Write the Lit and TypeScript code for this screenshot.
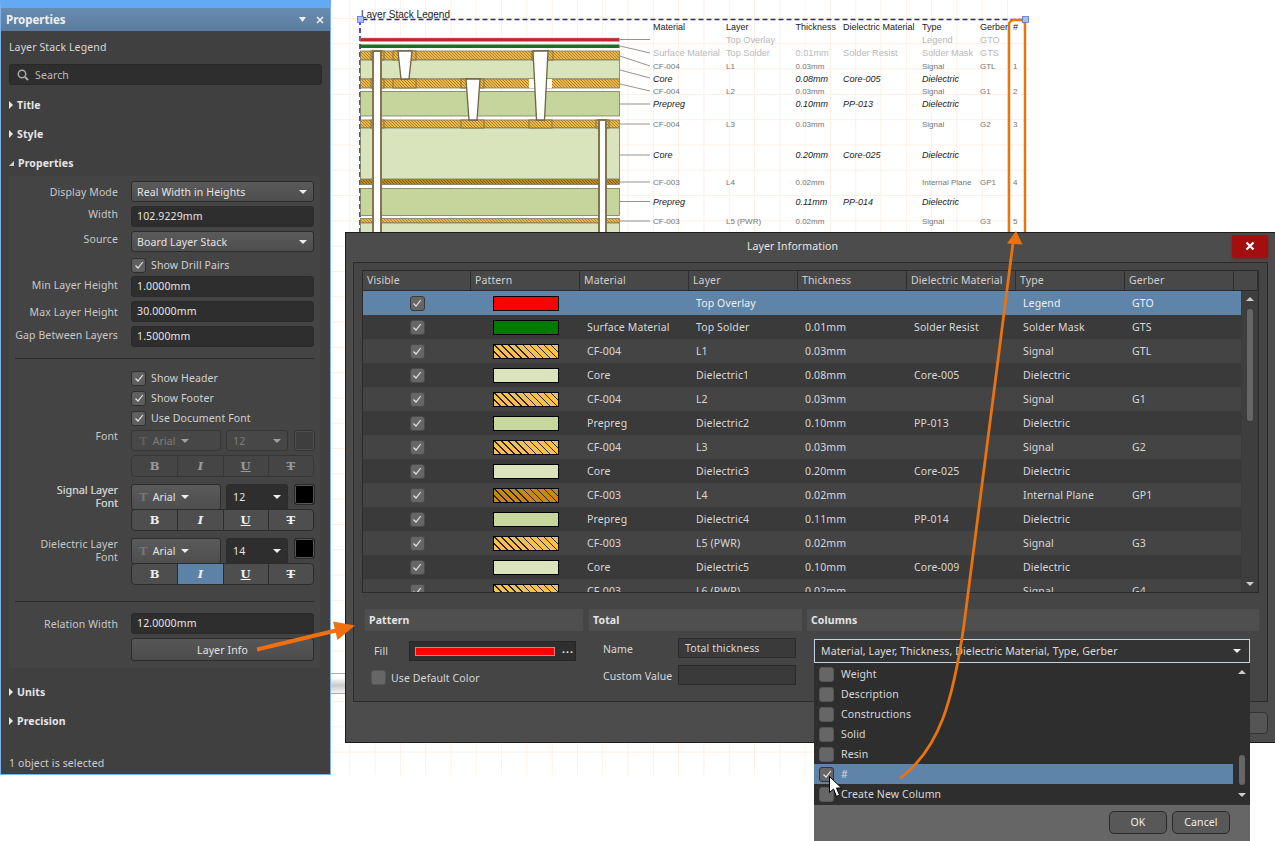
import { LitElement, html, svg, css } from "lit";
import { customElement } from "lit/decorators.js";

const CHECK = html`<svg class="tick" viewBox="0 0 12 12"><path d="M2.5 6.5 5 9l4.8-6" fill="none" stroke="#e6e6e6" stroke-width="1.2"/></svg>`;

type Row = [string, string, string, string, string, string, string];
const ROWS: Row[] = [
  ["red", "", "Top Overlay", "", "", "Legend", "GTO"],
  ["green", "Surface Material", "Top Solder", "0.01mm", "Solder Resist", "Solder Mask", "GTS"],
  ["hatch", "CF-004", "L1", "0.03mm", "", "Signal", "GTL"],
  ["core", "Core", "Dielectric1", "0.08mm", "Core-005", "Dielectric", ""],
  ["hatch", "CF-004", "L2", "0.03mm", "", "Signal", "G1"],
  ["prepreg", "Prepreg", "Dielectric2", "0.10mm", "PP-013", "Dielectric", ""],
  ["hatch", "CF-004", "L3", "0.03mm", "", "Signal", "G2"],
  ["core", "Core", "Dielectric3", "0.20mm", "Core-025", "Dielectric", ""],
  ["dark", "CF-003", "L4", "0.02mm", "", "Internal Plane", "GP1"],
  ["prepreg", "Prepreg", "Dielectric4", "0.11mm", "PP-014", "Dielectric", ""],
  ["hatch", "CF-003", "L5 (PWR)", "0.02mm", "", "Signal", "G3"],
  ["core", "Core", "Dielectric5", "0.10mm", "Core-009", "Dielectric", ""],
  ["hatch", "CF-003", "L6 (PWR)", "0.02mm", "", "Signal", "G4"],
];

// y, class, material, layer, thickness, dielectric, type, gerber, number
const LEGEND: [number, string, string, string, string, string, string, string, string][] = [
  [30, "lh", "Material", "Layer", "Thickness", "Dielectric Material", "Type", "Gerber", "#"],
  [43, "lf", "", "Top Overlay", "", "", "Legend", "GTO", ""],
  [56, "lf", "Surface Material", "Top Solder", "0.01mm", "Solder Resist", "Solder Mask", "GTS", ""],
  [69, "ls", "CF-004", "L1", "0.03mm", "", "Signal", "GTL", "1"],
  [82, "ld", "Core", "", "0.08mm", "Core-005", "Dielectric", "", ""],
  [94, "ls", "CF-004", "L2", "0.03mm", "", "Signal", "G1", "2"],
  [107, "ld", "Prepreg", "", "0.10mm", "PP-013", "Dielectric", "", ""],
  [127, "ls", "CF-004", "L3", "0.03mm", "", "Signal", "G2", "3"],
  [158, "ld", "Core", "", "0.20mm", "Core-025", "Dielectric", "", ""],
  [185, "ls", "CF-003", "L4", "0.02mm", "", "Internal Plane", "GP1", "4"],
  [205, "ld", "Prepreg", "", "0.11mm", "PP-014", "Dielectric", "", ""],
  [224, "ls", "CF-003", "L5 (PWR)", "0.02mm", "", "Signal", "G3", "5"],
];
const LEGEND_X = [653, 726, 795.5, 843, 922, 980, 1013];

const BANDS: [number, number, string][] = [
  [51, 9, "url(#hl)"], [60, 19, "#d9e3bc"], [79, 9, "url(#hl)"], [91.5, 24.5, "#c6d59c"],
  [120, 8, "url(#hl)"], [128, 51, "#d9e3bc"], [179.5, 5, "url(#hd)"], [188.5, 27, "#c6d59c"],
  [218.5, 4.5, "url(#hl)"], [223, 12, "#d9e3bc"],
];
const LEADERS: [number, number][] = [
  [39.5, 39.5], [46, 53], [56, 66], [70, 78], [84, 91], [104, 104], [124, 124], [155, 155], [182, 182], [201.5, 201.5], [221, 221],
];
const PADS: [number, number, number, number][] = [
  [371, 51, 13, 9], [393, 51, 23, 9], [532, 51, 21, 9],
  [393, 79, 23, 9], [461, 79, 23, 9], [371, 79, 13, 9],
  [461, 120, 23, 8], [529, 120, 23, 8], [596, 120, 13, 8], [371, 120, 13, 8],
];

@customElement("app-root")
export class AppRoot extends LitElement {
  static styles = css`
    :host { display: block; position: relative; width: 1275px; height: 841px; overflow: hidden; background: #fff;
      font-family: "Noto Sans", "Liberation Sans", sans-serif; font-size: 10.5px; letter-spacing: .12px; color: #d8d8d8; }
    * { box-sizing: border-box; }

    .grid-bg { position: absolute; left: 331px; top: 0; width: 699px; height: 775px;
      background-image: linear-gradient(to right, #fdf0e5 1px, transparent 1px), linear-gradient(to bottom, #fdf0e5 1px, transparent 1px);
      background-size: 25.3px 25.3px; background-position: -7px 18px; }
    .legend { position: absolute; left: 0; top: 0; width: 1275px; height: 241px; }
    .hscroll { position: absolute; left: 331px; top: 673px; width: 14px; height: 21px; border-top: 1px solid #aaa; border-bottom: 1px solid #aaa;
      background: linear-gradient(#fff 20%, #c9c9c9 60%, #f4f4f4); }
    .lt { font-family: "Liberation Sans", sans-serif; letter-spacing: 0; }
    .ttl { font-size: 10px; fill: #222; }
    .lh { font-size: 9px; fill: #222; }
    .lf { font-size: 9.2px; fill: #b9b9b9; }
    .ls { font-size: 8px; fill: #757575; }
    .ld { font-size: 9px; font-style: italic; fill: #222; }

    /* Properties panel */
    .panel { position: absolute; left: 0; top: 0; width: 331px; height: 775px; background: #404040; display: flex; flex-direction: column;
      border: 1px solid #7fb2e8; border-top: 8px solid #62aaf3; border-width: 8px 1px 1px 1px; }
    .ptitle { height: 23px; flex: none; background: linear-gradient(#688cb0, #5a7c9f); display: flex; align-items: center; padding: 0 6px 0 5px;
      font-weight: 700; font-size: 11.5px; letter-spacing: 0; color: #f0f0f0; }
    .ptitle span:first-child { flex: 1; }
    .pctl { display: flex; gap: 9px; align-items: center; }
    .pbody { flex: 1; padding: 0 8px; display: flex; flex-direction: column; }
    .caption { height: 31px; flex: none; display: flex; align-items: center; }
    .search { height: 21px; flex: none; margin: 2px 0 5px; background: #2e2e2e; border: 1px solid #282828; border-radius: 3px; display: flex; align-items: center; gap: 6px; padding: 0 7px; color: #bdbdbd; width: 313px; }
    .sec { height: 29px; flex: none; display: flex; align-items: center; gap: 4px; font-weight: 700; color: #e6e6e6; }
    .sec.open { height: 28px; padding-top: 2px; }
    .tri { width: 0; height: 0; border-left: 4px solid #e6e6e6; border-top: 4px solid transparent; border-bottom: 4px solid transparent; margin-left: 0; }
    .tri.down { border: 0; border-bottom: 5px solid #cfcfcf; border-left: 5px solid transparent; }
    .group { width: 311px; height: 492px; flex: none; background: #444; border-radius: 4px; padding-top: 5px; display: flex; flex-direction: column; gap: 4px; }
    .row { display: grid; grid-template-columns: 109px 183px; column-gap: 13px; height: 21px; flex: none; }
    .row.cb { height: 16px; }
    .row.bar { height: 22px; }
    .row.tall { height: 23px; }
    .row.top { margin-top: 3px; }
    .lab { grid-column: 1; text-align: right; line-height: 13px; padding-top: 2px; color: #c8c8c8; white-space: nowrap; }
    .lab.mid { padding-top: 5px; }
    .lab.low { padding-top: 3px; }
    .lab.flush { padding-top: 0; }
    .lab.ghost { text-shadow: .3px 0 0 #c8c8c8; }
    .ctl { grid-column: 2; }
    .sel { height: 100%; background: linear-gradient(#5a5a5a, #4e4e4e); border: 1px solid #2c2c2c; border-radius: 3px; display: flex; align-items: center; padding: 0 6px 0 5px; color: #e4e4e4; }
    .sel span:first-of-type { flex: 1; }
    .arr { width: 0; height: 0; border-left: 4px solid transparent; border-right: 4px solid transparent; border-top: 4px solid #eee; flex: none; }
    .inp { height: 100%; background: #2e2e2e; border: 1px solid #2a2a2a; border-radius: 3px; display: flex; align-items: center; padding: 0 5px 1px; color: #e4e4e4; }
    .chk { display: flex; align-items: center; gap: 5px; height: 100%; color: #d2d2d2; }
    .row.cb.first { margin-top: 1px; margin-bottom: -1px; }
    .box { width: 15px; height: 15px; flex: none; background: #5f5f5f; border: 1px solid #2e2e2e; border-radius: 3px; display: flex; align-items: center; justify-content: center; }
    .tick { width: 12px; height: 12px; display: block; }
    .fontrow { display: flex; gap: 5px; height: 100%; }
    .fsel { width: 90px; flex: none; padding-left: 7px; gap: 5px; }
    .tglyph { font-family: "Liberation Serif", serif; font-size: 13px; color: #777; flex: none !important; font-weight: 700; letter-spacing: 0; }
    .ssel { width: 62px; flex: none; background: #2e2e2e; padding: 0 6px; }
    .swatch { width: 21px; height: 21px; flex: none; border: 1px solid #2a2a2a; border-radius: 3px; background: #000; box-shadow: inset 0 0 0 1px #555; margin-left: 1px; }
    .fontrow.off { opacity: .55; }
    .fontrow.off .fsel, .fontrow.off .ssel { background: #4a4a4a; color: #aaa; }
    .fontrow.off .swatch { background: #3a3a3a; }
    .seg { display: grid; grid-template-columns: repeat(4, 1fr); height: 100%; border: 1px solid #2c2c2c; border-radius: 4px; overflow: hidden; background: #4e4e4e; }
    .seg.off { opacity: .5; background: #474747; }
    .seg div { display: flex; align-items: center; justify-content: center; border-left: 1px solid #2c2c2c; font-family: "DejaVu Serif", serif; font-weight: 700; font-size: 11.5px; color: #eee; letter-spacing: 0; }
    .seg div:first-child { border-left: 0; }
    .seg .on { background: #5d82a8; }
    .seg .i { font-style: italic; }
    .seg .u { text-decoration: underline; }
    .seg .t { text-decoration: line-through; }
    .sep { height: 1px; flex: none; background: #2a2a2a; margin: 7px 0 7px 6px; width: 299px; }
    .sep.b { margin-top: 12px; }
    .btn { height: 100%; background: linear-gradient(#565656, #4c4c4c); border: 1px solid #2c2c2c; border-radius: 3px; display: flex; align-items: center; justify-content: center; color: #e4e4e4; }
    .spacer { flex: 1; }
    .after { margin-top: 9px; }
    .status { height: 24px; flex: none; display: flex; align-items: center; padding-top: 1px; color: #cfcfcf; }

    /* Dialog */
    .dialog { position: absolute; left: 345px; top: 232px; width: 930px; height: 511px; background: #4c4c4c; border: 1px solid #1c1c1c; border-right: 0;
      display: flex; flex-direction: column; padding: 0 7px 0 7px; }
    .dtitle { height: 29px; flex: none; display: flex; align-items: center; justify-content: center; position: relative; color: #e6e6e6; padding: 0 36px 3px 0; }
    .close { position: absolute; right: 0; top: 2px; width: 36px; height: 22px; background: #a30f0f; color: #fff; display: flex; align-items: center; justify-content: center; box-shadow: 0 2px 3px #7a2020; }
    .frame { height: 440px; flex: none; background: #454545; border: 1px solid #2b2b2b; padding: 7px 8px 8px; display: flex; flex-direction: column; }
    .table { height: 323px; flex: none; border: 1px solid #2a2a2a; background: #3a3a3a; position: relative; overflow: hidden; display: flex; flex-direction: column; }
    .thead { height: 20px; flex: none; display: grid; grid-template-columns: 108px repeat(7, 109px) 1fr; background: #484848; border-bottom: 1px solid #2a2a2a; }
    .thead div { padding: 0 0 1px 4px; display: flex; align-items: center; border-right: 1px solid #2e2e2e; color: #d0d0d0; white-space: nowrap; }
    .tbody { flex: 1; position: relative; overflow: hidden; }
    .tr { height: 24px; width: 878px; display: grid; grid-template-columns: 108px repeat(7, 109px); align-items: center; background: #3a3a3a; color: #d8d8d8; }
    .tr.alt { background: #444; }
    .tr.sel-row { background: #5f84a9; color: #f0f0f0; }
    .tr > span { padding-left: 7px; white-space: nowrap; }
    .tc { display: flex; justify-content: center; }
    .tc .box { background: #666; border-color: #4a4a4a; }
    .tr.sel-row .box { border-color: #3a3a3a; }
    .sw { width: 66px; height: 15px; border: 1px solid #000; }
    .sw.red { background: #f00; }
    .sw.green { background: #007a00; }
    .sw.core { background: #dbe3bd; }
    .sw.prepreg { background: #c8d79e; }
    .sw.hatch { background: repeating-linear-gradient(45deg, #f5c150 0 4px, #2a2410 4px 5px); }
    .sw.dark { background: repeating-linear-gradient(45deg, #c48a10 0 4px, #2a2410 4px 5px); }
    .vbar { position: absolute; right: 0; top: 20px; bottom: 0; width: 16px; background: #3e3e3e; display: flex; flex-direction: column; align-items: center; justify-content: space-between; padding: 6px 0; }
    .up { width: 0; height: 0; border-left: 4px solid transparent; border-right: 4px solid transparent; border-bottom: 4px solid #ccc; flex: none; }
    .dn { width: 0; height: 0; border-left: 4px solid transparent; border-right: 4px solid transparent; border-top: 4px solid #ccc; flex: none; }
    .thumb { position: absolute; left: 5px; top: 18px; width: 6px; height: 112px; border-radius: 3px; background: #666; }
    .lower { display: grid; grid-template-columns: 218px 213px 451px; column-gap: 6px; margin: 16px 0 0 3px; }
    .lower > div { min-width: 0; }
    .lower > div:last-child { margin-left: -1px; }
    .shead { height: 22px; background: #4f4f4f; display: flex; align-items: center; padding: 0 0 1px 4px; font-weight: 700; color: #e4e4e4; }
    .filled { display: grid; grid-template-columns: 35px 167px; align-items: center; margin: 10px 0 0 9px; height: 20px; }
    .fillbox { height: 20px; background: #2f2f2f; border: 1px solid #262626; display: flex; align-items: center; padding: 0 5px; gap: 7px; }
    .fillbar { width: 140px; height: 9px; background: #f00; border: 1px solid #d98080; flex: none; }
    .dots { color: #eee; font-weight: 700; letter-spacing: 1px; line-height: 1; margin-top: -4px; }
    .dflt { display: flex; align-items: center; gap: 5px; margin: 9px 0 0 6px; height: 15px; }
    .dflt .box { background: #666; border-color: #555; }
    .tot { display: grid; grid-template-columns: 75px 118px; margin: 7px 0 0 14px; row-gap: 7px; }
    .tot .tl { display: flex; align-items: center; height: 20px; padding-top: 2px; white-space: nowrap; }
    .tot .ti { height: 20px; background: #3a3a3a; border: 1px solid #2a2a2a; padding: 0 6px; display: flex; align-items: center; }
    .combo { height: 24px; margin: 8px 9px 0 7px; background: #333; border: 1px solid #c0d4e6; display: flex; align-items: center; padding: 0 8px 0 6px; color: #dcdcdc; }
    .combo span { flex: 1; }
    .dfoot { flex: 1; display: flex; justify-content: flex-end; padding-top: 10px; }
    .dbtn { width: 60px; height: 22px; background: #555; border: 1px solid #333; border-radius: 4px; }

    /* Popup */
    .popup { position: absolute; left: 814px; top: 663px; width: 436px; height: 178px; background: #666; display: flex; flex-direction: column; }
    .plist { height: 142px; flex: none; background: #2e2e2e; position: relative; padding-top: 1px; }
    .pitem { height: 20px; width: 419px; display: flex; align-items: center; gap: 7px; padding-left: 5px; color: #d8d8d8; }
    .pitem .box { background: #666; border-color: #555; }
    .pitem.hl { background: #5f84a9; }
    .pitem.hl .box { border-color: #333; }
    .pbar { position: absolute; right: 0; top: 0; bottom: 0; width: 17px; display: flex; flex-direction: column; align-items: center; justify-content: space-between; padding: 7px 0 8px; }
    .pthumb { position: absolute; left: 6px; top: 92px; width: 6px; height: 30px; border-radius: 3px; background: #666; }
    .pfoot { flex: 1; display: flex; justify-content: flex-end; align-items: center; gap: 5px; padding: 0 20px 2px 0; }
    .pbtn { width: 58px; height: 23px; border: 1px solid #2a2a2a; border-radius: 5px; background: #585858; display: flex; align-items: center; justify-content: center; color: #eee; }

    .overlay { position: absolute; left: 0; top: 0; width: 1275px; height: 841px; pointer-events: none; }
  `;

  private sel(t: string) {
    return html`<div class="ctl sel"><span>${t}</span><i class="arr"></i></div>`;
  }
  private inp(t: string) {
    return html`<div class="ctl inp">${t}</div>`;
  }
  private chk(t: string, first = false) {
    return html`<div class="row cb ${first ? "first" : ""}"><div class="ctl chk"><div class="box">${CHECK}</div>${t}</div></div>`;
  }
  private font(size: string, off = false) {
    return html`<div class="ctl fontrow ${off ? "off" : ""}">
      <div class="sel fsel"><span class="tglyph">T</span><span>Arial</span><i class="arr"></i></div>
      <div class="sel ssel"><span>${size}</span><i class="arr"></i></div>
      <div class="swatch"></div>
    </div>`;
  }
  private seg(off = false, active = false) {
    return html`<div class="row bar"><div class="ctl seg ${off ? "off" : ""}">
      <div>B</div><div class="i ${active ? "on" : ""}">I</div><div class="u">U</div><div class="t">T</div>
    </div></div>`;
  }

  private renderPanel() {
    return html`<div class="panel">
      <div class="ptitle"><span>Properties</span>
        <span class="pctl">
          <svg width="8" height="6" viewBox="0 0 8 6"><path d="M0 0h7L3.5 5z" fill="#eee"/></svg>
          <svg width="8" height="8" viewBox="0 0 8 8"><path d="M1 1l6 6M7 1L1 7" stroke="#eee" stroke-width="1.6"/></svg>
        </span></div>
      <div class="pbody">
        <div class="caption">Layer Stack Legend</div>
        <div class="search">
          <svg width="12" height="12" viewBox="0 0 12 12"><circle cx="5" cy="5" r="3.7" fill="none" stroke="#aaa" stroke-width="1.5"/><path d="M8 8l3 3" stroke="#aaa" stroke-width="2"/></svg>
          Search</div>
        <div class="sec"><i class="tri"></i>Title</div>
        <div class="sec"><i class="tri"></i>Style</div>
        <div class="sec open"><i class="tri down"></i>Properties</div>
        <div class="group">
          <div class="row"><div class="lab mid">Display Mode</div>${this.sel("Real Width in Heights")}</div>
          <div class="row"><div class="lab">Width</div>${this.inp("102.9229mm")}</div>
          <div class="row"><div class="lab">Source</div>${this.sel("Board Layer Stack")}</div>
          ${this.chk("Show Drill Pairs", true)}
          <div class="row"><div class="lab low">Min Layer Height</div>${this.inp("1.0000mm")}</div>
          <div class="row"><div class="lab mid">Max Layer Height</div>${this.inp("30.0000mm")}</div>
          <div class="row"><div class="lab low">Gap Between Layers</div>${this.inp("1.5000mm")}</div>
          <div class="sep"></div>
          ${this.chk("Show Header")}
          ${this.chk("Show Footer")}
          ${this.chk("Use Document Font")}
          <div class="row"><div class="lab flush">Font</div>${this.font("12", true)}</div>
          ${this.seg(true)}
          <div class="row top"><div class="lab ghost flush">Signal Layer<br />Font</div>${this.font("12")}</div>
          ${this.seg()}
          <div class="row top"><div class="lab flush">Dielectric Layer<br />Font</div>${this.font("14")}</div>
          ${this.seg(false, true)}
          <div class="sep b"></div>
          <div class="row"><div class="lab mid">Relation Width</div>${this.inp("12.0000mm")}</div>
          <div class="row tall"><div class="ctl btn">Layer Info</div></div>
        </div>
        <div class="sec after"><i class="tri"></i>Units</div>
        <div class="sec"><i class="tri"></i>Precision</div>
        <div class="spacer"></div>
        <div class="status">1 object is selected</div>
      </div>
    </div>`;
  }

  private renderDialog() {
    return html`<div class="dialog">
      <div class="dtitle">Layer Information
        <div class="close"><svg width="10" height="10" viewBox="0 0 10 10"><path d="M1.5 1.5l7 7M8.5 1.5l-7 7" stroke="#fff" stroke-width="2.2"/></svg></div>
      </div>
      <div class="frame">
        <div class="table">
          <div class="thead">
            ${["Visible", "Pattern", "Material", "Layer", "Thickness", "Dielectric Material", "Type", "Gerber", ""].map((h) => html`<div>${h}</div>`)}
          </div>
          <div class="tbody">
            ${ROWS.map((r, i) => html`<div class="tr ${i === 0 ? "sel-row" : i % 2 === 0 ? "alt" : ""}">
              <div class="tc"><div class="box">${CHECK}</div></div>
              <div class="tc"><div class="sw ${r[0]}"></div></div>
              ${r.slice(1).map((c) => html`<span>${c}</span>`)}
            </div>`)}
          </div>
          <div class="vbar"><i class="up"></i><div class="thumb"></div><i class="dn"></i></div>
        </div>
        <div class="lower">
          <div>
            <div class="shead">Pattern</div>
            <div class="filled">Fill<div class="fillbox"><div class="fillbar"></div><span class="dots">...</span></div></div>
            <div class="dflt"><div class="box"></div>Use Default Color</div>
          </div>
          <div>
            <div class="shead">Total</div>
            <div class="tot">
              <div class="tl">Name</div><div class="ti">Total thickness</div>
              <div class="tl">Custom Value</div><div class="ti"></div>
            </div>
          </div>
          <div>
            <div class="shead">Columns</div>
            <div class="combo"><span>Material, Layer, Thickness, Dielectric Material, Type, Gerber</span><i class="arr"></i></div>
          </div>
        </div>
      </div>
      <div class="dfoot"><div class="dbtn"></div></div>
    </div>`;
  }

  private renderPopup() {
    const items = ["Weight", "Description", "Constructions", "Solid", "Resin", "#", "Create New Column"];
    return html`<div class="popup">
      <div class="plist">
        ${items.map((t) => html`<div class="pitem ${t === "#" ? "hl" : ""}"><div class="box">${t === "#" ? CHECK : ""}</div>${t}</div>`)}
        <div class="pbar"><i class="up"></i><div class="pthumb"></div><i class="dn"></i></div>
      </div>
      <div class="pfoot"><div class="pbtn">OK</div><div class="pbtn">Cancel</div></div>
    </div>`;
  }

  private renderLegend() {
    return html`<svg class="legend" viewBox="0 0 1275 241">
      <defs>
        <pattern id="hl" width="3" height="3" patternUnits="userSpaceOnUse"><rect width="3" height="3" fill="#ecb94f"/><path d="M-1 -1L4 4M-1 2L1 4M2 -1L4 1" stroke="#9c7420" stroke-width=".8"/></pattern>
        <pattern id="hd" width="3" height="3" patternUnits="userSpaceOnUse"><rect width="3" height="3" fill="#c48a12"/><path d="M-1 -1L4 4M-1 2L1 4M2 -1L4 1" stroke="#77560f" stroke-width=".9"/></pattern>
      </defs>
      <text x="361" y="18" class="lt ttl">Layer Stack Legend</text>
      <path d="M360 241V19.5H1025" fill="none" stroke="#2b20b4" stroke-width="1.6" stroke-dasharray="5 3"/>
      <rect x="360" y="38" width="259.500" height="3.500" fill="#bb2b2b" stroke="#b9a0a0" stroke-width=".5"/>
      <rect x="360" y="44.500" width="259.500" height="3.500" fill="#1c6d2a"/>
      ${BANDS.map(([y, h, f]) => svg`<rect x="360.500" y="${y}" width="259" height="${h}" fill="${f}" stroke="#7a7a5a" stroke-width=".8"/>`)}
      ${PADS.map(([x, y, w, h]) => svg`<rect x="${x}" y="${y}" width="${w}" height="${h}" fill="url(#hl)" stroke="#7d6a3a" stroke-width=".9"/>`)}
      <rect x="529" y="79" width="6" height="9" fill="#fff"/><rect x="545" y="79" width="7" height="9" fill="#fff"/>
      <path d="M398 51h14l-3 28h-8zM466 79h14l-3 41h-8zM533 51h15l-3.500 69h-8z" fill="#fff" stroke="#6f6445" stroke-width="1.300"/>
      <path d="M373 51h8v190h-8zM599 120h7v121h-7z" fill="#fff" stroke="#85754f" stroke-width="2"/>
      ${LEADERS.map(([a, b], i) => svg`<path d="M620 ${a}L650 ${b}" stroke="${i === 5 ? "#bbb" : "#777"}" stroke-width="${i === 5 ? 1.6 : 0.8}"/>`)}
      ${LEGEND.map((r) => r.slice(2).map((t, i) => svg`<text x="${LEGEND_X[i]}" y="${r[0]}" class="lt ${r[1]}">${t}</text>`))}
      <rect x="1009" y="20" width="16" height="230" rx="5" fill="none" stroke="#e8750f" stroke-width="2.500"/>
      <rect x="357.500" y="16.500" width="6" height="6" fill="#a9c0ee" stroke="#5a74c8" stroke-width=".8"/>
      <rect x="1022.500" y="16.500" width="6" height="6" fill="#a9c0ee" stroke="#5a74c8" stroke-width=".8"/>
    </svg>`;
  }

  render() {
    return html`
      <div class="grid-bg"></div>
      ${this.renderLegend()}
      <div class="hscroll"></div>
      ${this.renderPanel()}
      ${this.renderDialog()}
      ${this.renderPopup()}
      <svg class="overlay" viewBox="0 0 1275 841">
        <path d="M257 649.500L338 630" stroke="#f06f10" stroke-width="4" fill="none"/>
        <path d="M355 625.500L333 621.500L337.500 640z" fill="#f06f10"/>
        <path d="M900 778.500C940 748 953 700 964 625L1013 243" stroke="#e8730f" stroke-width="2.800" fill="none"/>
        <path d="M1016 231L1007 243.500L1022.500 244.500z" fill="#e8730f"/>
        <path d="M829.500 776.500V792.500L833.500 789L836.500 796.500L839.500 795L836.500 788H841.500z" fill="#fff" stroke="#000" stroke-width="1"/>
      </svg>`;
  }
}
